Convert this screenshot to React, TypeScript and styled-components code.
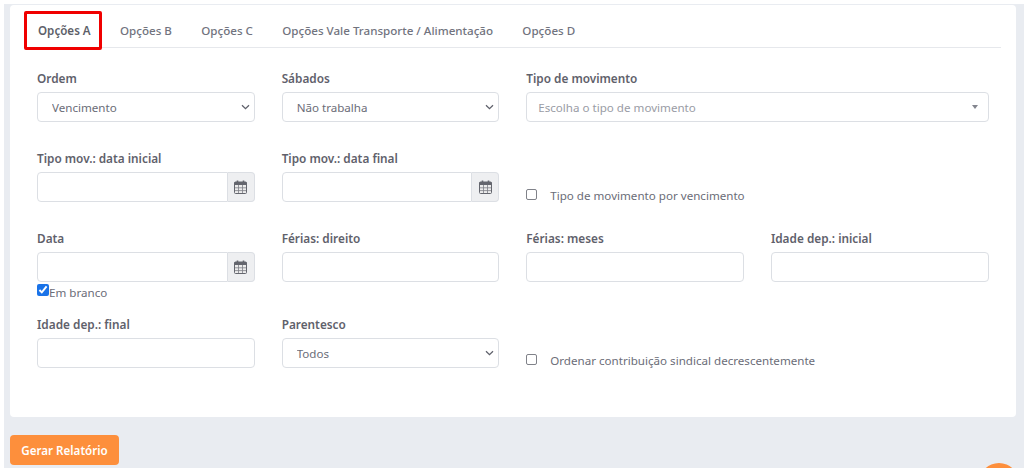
import styled, { createGlobalStyle } from "styled-components"

const chevron = encodeURIComponent(
  '<svg xmlns="http://www.w3.org/2000/svg" width="9" height="6" viewBox="0 0 9 6"><path d="M1 1.2l3.5 3.4L8 1.2" fill="none" stroke="#5f616b" stroke-width="1.3"/></svg>'
)

const GlobalStyle = createGlobalStyle`
  html, body {
    margin: 0;
    padding: 0;
    background: #fff;
  }

  body {
    font-family: "Noto Sans", "Liberation Sans", sans-serif;
    font-size: 11.6px;
    color: #6b6d78;
  }
`

const Page = styled.div`
  width: 1020px;
  height: 464px;
  margin: 4px 0 0 4px;
  padding: 1px 8px 0 6px;
  box-sizing: border-box;
  background: #e9ecf1;
  overflow: hidden;
  position: relative;
`

const Card = styled.div`
  height: 412px;
  box-sizing: border-box;
  padding: 9px 15px 0 14px;
  background: #fff;
  border-radius: 4px;
`

const Tabs = styled.div`
  display: flex;
  height: 33px;
  margin-bottom: 24px;
  border-bottom: 1px solid #e6e8ec;
  position: relative;
`

const Tab = styled.div<{ $active?: boolean }>`
  display: flex;
  align-items: center;
  padding: 0 14.65px;
  font-size: 11.6px;
  font-weight: ${props => (props.$active ? 600 : 500)};
  color: ${props => (props.$active ? "#5d5f69" : "#71737e")};

  &:first-child {
    padding-left: 14px;
  }
`

const Highlight = styled.div`
  position: absolute;
  left: 0;
  top: -3px;
  width: 78px;
  height: 39px;
  box-sizing: border-box;
  border: 3px solid #f00000;
  border-radius: 2px;
`

const Body = styled.div`
  padding: 0 12.5px 0 13px;
`

const Row = styled.div<{ $gap: number }>`
  display: grid;
  grid-template-columns: repeat(4, 1fr);
  column-gap: 27px;
  margin-bottom: ${props => props.$gap}px;
`

const Field = styled.div<{ $span?: number }>`
  grid-column: span ${props => props.$span ?? 1};
  display: flex;
  flex-direction: column;
`

const Label = styled.label`
  height: 17px;
  margin-bottom: 3px;
  font-size: 11.8px;
  line-height: 13px;
  font-weight: 600;
  color: #5f616b;
`

const controlBase = `
  width: 100%;
  height: 30px;
  box-sizing: border-box;
  border: 1px solid #dcdfe4;
  border-radius: 4px;
  background: #fff;
  font-family: inherit;
  font-size: 11.6px;
  color: #6b6d78;
`

const Select = styled.select`
  ${controlBase}
  appearance: none;
  padding: 0 14px;
  background: #fff url("data:image/svg+xml,${chevron}") no-repeat right 4px center;
`

const Input = styled.input`
  ${controlBase}
`

const DateGroup = styled.div`
  display: flex;
  height: 30px;
`

const DateInput = styled.input`
  ${controlBase}
  flex: 1;
  min-width: 0;
  border-radius: 4px 0 0 4px;
`

const DateAddon = styled.div`
  display: flex;
  align-items: center;
  justify-content: center;
  width: 27px;
  box-sizing: border-box;
  border: 1px solid #dcdfe4;
  border-left: 0;
  border-radius: 0 4px 4px 0;
  background: #eeeff1;
`

const Select2 = styled.div`
  ${controlBase}
  display: flex;
  align-items: center;
  justify-content: space-between;
  padding: 0 10px 0 11px;
  color: #9a9ca5;
`

const Caret = styled.span`
  width: 0;
  height: 0;
  border-left: 3px solid transparent;
  border-right: 3px solid transparent;
  border-top: 4px solid #83858e;
`

const CheckField = styled.label<{ $top: number }>`
  grid-column: span 2;
  display: flex;
  align-items: center;
  gap: 13px;
  height: 18px;
  margin-top: ${props => props.$top}px;
`

const PlainCheck = styled.span`
  width: 11px;
  height: 11px;
  box-sizing: border-box;
  margin-top: -2px;
  border: 1px solid #808289;
  border-radius: 2px;
  background: #fff;
`

const InlineCheck = styled.label`
  display: flex;
  align-items: center;
  height: 18px;
  margin-top: 1px;
`

const Tick = styled.input`
  width: 12px;
  height: 12px;
  margin: -4px 0 0;
  accent-color: #1a73e8;
`

const Button = styled.button`
  display: block;
  width: 109px;
  height: 30px;
  margin-top: 18px;
  padding: 0;
  border: 0;
  border-radius: 4px;
  background: #fd8f3c;
  color: #fff;
  font-family: inherit;
  font-size: 11.6px;
  font-weight: 600;
`

const Fab = styled.div`
  position: absolute;
  right: 5px;
  top: 459px;
  width: 40px;
  height: 40px;
  border-radius: 50%;
  background: #fd8f3c;
`

const CalendarIcon = () => (
  <svg width="13" height="14" viewBox="0 0 13 14" fill="none">
    <rect x="0.5" y="2" width="12" height="11.5" rx="1" fill="#ececec" stroke="#64666e" />
    <rect x="0.5" y="2" width="12" height="3" fill="#64666e" />
    <path d="M4.5 5v8M8.5 5v8M1 7.8h11M1 10.6h11" stroke="#7d7f87" strokeWidth="0.8" />
    <path d="M3.5 0.5v3M9.5 0.5v3" stroke="#64666e" strokeWidth="1.6" />
  </svg>
)

const DateField = ({ label }: { label: string }) => (
  <>
    <Label>{label}</Label>
    <DateGroup>
      <DateInput />
      <DateAddon>
        <CalendarIcon />
      </DateAddon>
    </DateGroup>
  </>
)

export default function App() {
  return (
    <>
      <GlobalStyle />
      <Page>
        <Card>
          <Tabs>
            <Tab $active>Opções A</Tab>
            <Tab>Opções B</Tab>
            <Tab>Opções C</Tab>
            <Tab>Opções Vale Transporte / Alimentação</Tab>
            <Tab>Opções D</Tab>
            <Highlight />
          </Tabs>
          <Body>
            <Row $gap={30}>
              <Field>
                <Label>Ordem</Label>
                <Select defaultValue="Vencimento">
                  <option>Vencimento</option>
                </Select>
              </Field>
              <Field>
                <Label>Sábados</Label>
                <Select defaultValue="Não trabalha">
                  <option>Não trabalha</option>
                </Select>
              </Field>
              <Field $span={2}>
                <Label>Tipo de movimento</Label>
                <Select2>
                  Escolha o tipo de movimento
                  <Caret />
                </Select2>
              </Field>
            </Row>
            <Row $gap={28}>
              <Field>
                <DateField label="Tipo mov.: data inicial" />
              </Field>
              <Field>
                <DateField label="Tipo mov.: data final" />
              </Field>
              <CheckField $top={34}>
                <PlainCheck />
                Tipo de movimento por vencimento
              </CheckField>
            </Row>
            <Row $gap={17}>
              <Field>
                <DateField label="Data" />
                <InlineCheck>
                  <Tick type="checkbox" defaultChecked />
                  Em branco
                </InlineCheck>
              </Field>
              <Field>
                <Label>Férias: direito</Label>
                <Input />
              </Field>
              <Field>
                <Label>Férias: meses</Label>
                <Input />
              </Field>
              <Field>
                <Label>Idade dep.: inicial</Label>
                <Input />
              </Field>
            </Row>
            <Row $gap={0}>
              <Field>
                <Label>Idade dep.: final</Label>
                <Input />
              </Field>
              <Field>
                <Label>Parentesco</Label>
                <Select defaultValue="Todos">
                  <option>Todos</option>
                </Select>
              </Field>
              <CheckField $top={33}>
                <PlainCheck />
                Ordenar contribuição sindical decrescentemente
              </CheckField>
            </Row>
          </Body>
        </Card>
        <Button>Gerar Relatório</Button>
        <Fab />
      </Page>
    </>
  )
}
